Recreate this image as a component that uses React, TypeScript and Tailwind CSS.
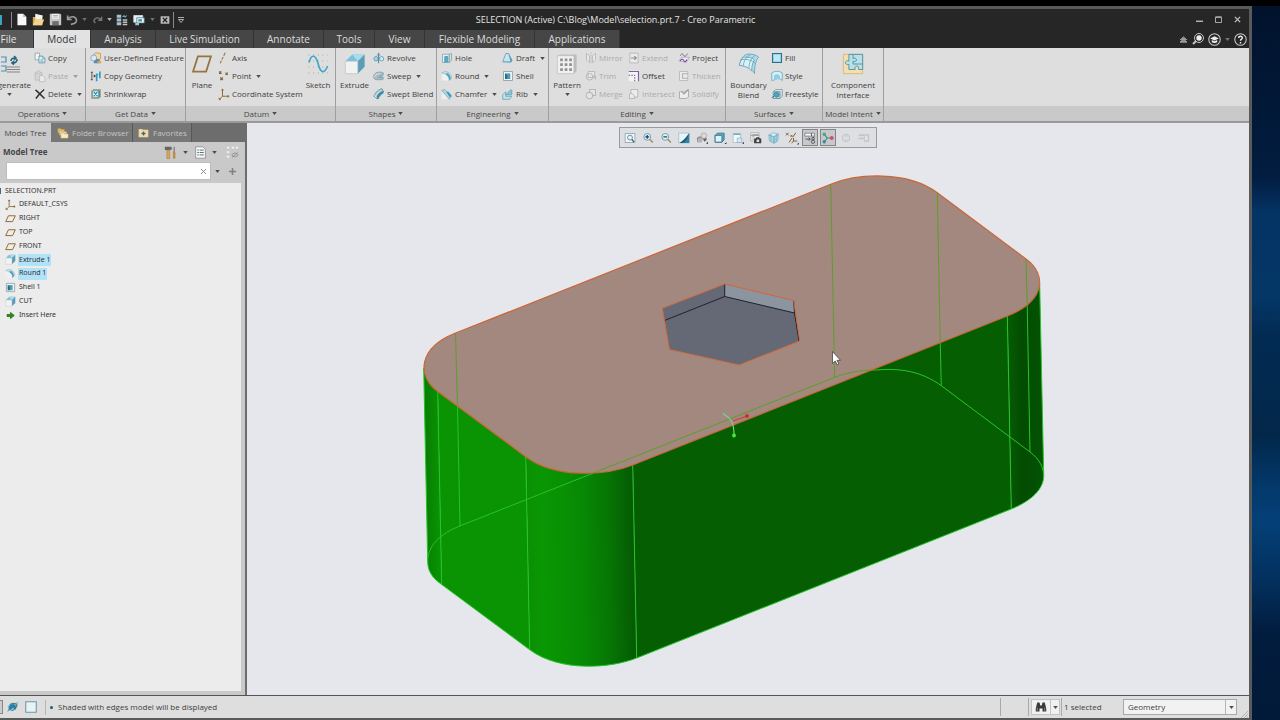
import React, { useState } from "react";

type IconProps = { name: string; className?: string };

const ICONS: Record<string, React.ReactNode> = {
  copy: (
    <g strokeWidth="1">
      <path d="M1.5 1.5h6v9h-6z" fill="#f4f7f8" stroke="#8b9499" />
      <path d="M6.5 5.5h5l3 3v6h-8z" fill="#d9eef5" stroke="#5f8797" />
      <path d="M11.5 5.5v3h3M8.500 10.500h4M8.500 12.500h4" fill="none" stroke="#5fa8c2" />
    </g>
  ),
  paste: (
    <g stroke="#b7b7b7">
      <path d="M1.5 3.500h9v10h-9z" fill="#d4d4d4" />
      <path d="M4 1.500h4v3H4z" fill="#e8e8e8" />
      <path d="M7.500 7.500h4l3 3v5h-7z" fill="#ececec" />
    </g>
  ),
  delete: <path d="M2 2.500C6 6 10 10 14 14M13.500 2C9 6 6 9 2.500 14" stroke="#2e2e2e" strokeWidth="1.900" fill="none" />,
  udf: (
    <g>
      <path d="M5 3l3-2 6 1v7l-3 2H5z" fill="#f5d9a0" stroke="#b88b45" />
      <circle cx="5" cy="8" r="4" fill="#d5ebf3" stroke="#6fa0b5" />
      <path d="M5 13l4-4 4 1v5H5z" fill="#5c87b8" />
      <path d="M10 12h5v3h-5z" fill="#d8a757" />
    </g>
  ),
  copygeom: (
    <g fill="none">
      <path d="M2.500 3v10M1 3h3M1 13h3" stroke="#333" />
      <path d="M5 6l3 2-3 2z" fill="#333" />
      <path d="M9 15V6h4V2M13 6v5" stroke="#3c9bbb" strokeWidth="2.500" />
      <path d="M11 2v12" stroke="#e9f6fa" />
    </g>
  ),
  shrink: (
    <g>
      <path d="M2 4l2-2h10v10l-2 2H2z" fill="#eadbb4" stroke="#a98f55" />
      <path d="M3.500 3.500h9v9h-9z" fill="#d8f0f8" stroke="#3f88a5" />
      <path d="M5 5l5 6M10 5l-5 6M12 3v9" stroke="#25799b" strokeWidth="1.500" />
    </g>
  ),
  plane: <path d="M5 2.500h9.500L11 13.500H1.500z" fill="none" stroke="#967440" strokeWidth="1.300" />,
  planeflat: <path d="M5 4h10l-4 8.500H1z" fill="#f3ecdf" stroke="#856a3e" strokeWidth="1.400" />,
  axis: <path d="M9.500 1L7.700 5M7 6.500L5.200 10M4.500 11.500L3 15" stroke="#967440" strokeWidth="1.400" />,
  point: (
    <path
      d="M1.500 2l3 3M4.500 2l-3 3M10 3.500l3 3M13 3.500l-3 3M3 10l3.500 3.500M6.500 10L3 13.500"
      stroke="#7d6139"
      strokeWidth="1.500"
    />
  ),
  csys: (
    <g stroke="#8b6a38" fill="#8b6a38" strokeWidth="1.300">
      <path d="M6 2v9h8M6 11l-4 4" fill="none" />
      <path d="M4.500 3L6 1l1.500 2zM13 9.500l2 1.500-2 1.500zM1 13l.5 2.500H4z" strokeWidth=".5" />
    </g>
  ),
  sketch: (
    <g fill="none">
      <path d="M1 1.500h14M1 5.800h14M1 10.200h14M1 14.500h14" stroke="#8a8a8a" strokeWidth=".6" strokeDasharray=".6 2.800" />
      <path d="M1.500 7C3 .5 6 1.500 7.500 6s2 8 4.500 7.500c1.500-.3 2-2 3-4" stroke="#3fa6c9" strokeWidth="1.200" />
    </g>
  ),
  extrude: (
    <g>
      <path d="M1 6l5-5h9L10 6z" fill="#7cc0da" />
      <path d="M6 1h9L10 6z" fill="#a8dcec" />
      <path d="M10 6l5-5v9l-5 5z" fill="#5b9db5" />
      <path d="M1 6h9v9H1z" fill="#f2f2f2" stroke="#b5c5cb" strokeWidth=".5" />
    </g>
  ),
  revolve: (
    <g fill="none">
      <path d="M7.500 1v14" stroke="#2f5b70" />
      <ellipse cx="4" cy="9" rx="2.700" ry="3" fill="#a9d5e3" stroke="#4390ad" />
      <ellipse cx="11.500" cy="9" rx="2.700" ry="3" fill="#d2edf5" stroke="#4390ad" />
      <path d="M5 4h5" stroke="#4390ad" />
    </g>
  ),
  sweep: (
    <g>
      <path d="M1 7c3-5 9-5 13-3l-1 4c-4-2-6-1-7 2l8 0-1 3H4C1 12 0 9 1 7z" fill="#aebdc2" stroke="#6e8b95" strokeWidth=".8" />
      <circle cx="10" cy="9" r="2" fill="#5fb6d3" />
      <path d="M2 9c2-4 5-4 8-4" stroke="#eef6f8" fill="none" />
    </g>
  ),
  sweptblend: (
    <g>
      <path d="M1 11c3-6 6-9 11-10l2 4c-4 1-6 4-8 9z" fill="#bcd3da" stroke="#46788b" strokeWidth=".9" />
      <path d="M4 14C6 8 9 5 14 4v3c-4 2-5 4-7 8z" fill="#3d8ba8" />
      <path d="M2 10l3 3" stroke="#fff" />
    </g>
  ),
  hole: (
    <g stroke="#4b91a9" fill="#bfe3ee">
      <path d="M2 3h9v11H2z" fill="#e2f3f8" stroke="#7d9da8" />
      <path d="M11 3l3-1v9l-3 3z" fill="#d2dee2" stroke="#7d9da8" />
      <path d="M5 14V6h4v8" fill="#52acca" />
    </g>
  ),
  round: (
    <g>
      <path d="M1 4l4-2c6 0 9 4 9 9l-3 3c0-6-3-9-10-10z" fill="#bfe0ea" stroke="#86a9b5" strokeWidth=".7" />
      <path d="M8 4c3 1 5 4 5 8l-2 2c0-4-2-6-5-8z" fill="#4ba7c6" />
      <path d="M1 5c6 0 9 4 9 9H1z" fill="#f0f0f0" />
    </g>
  ),
  chamfer: (
    <g>
      <path d="M1 3l4-1 9 9-3 4z" fill="#a9d7e6" stroke="#7198a5" strokeWidth=".7" />
      <path d="M7 5l3 0 4 5-2 3z" fill="#3c9bbd" />
      <path d="M1 5l9 10H1z" fill="#efefef" />
    </g>
  ),
  draft: (
    <g>
      <path d="M1 13L5 2h4l3 11z" fill="#c5e6f0" stroke="#5e97ab" />
      <path d="M9 2l5 9-2 3z" fill="#4d9db9" />
      <path d="M1 13l11 1" stroke="#72afc4" />
    </g>
  ),
  shell: (
    <g>
      <path d="M2 2h12v12H2z" fill="#eef3f4" stroke="#82959c" />
      <path d="M4 4.500h7v7.500H4z" fill="#4d9cb8" />
      <path d="M4 4.500l3 2.500v5H4z" fill="#2c6b83" />
    </g>
  ),
  rib: (
    <g stroke="#5d9bae">
      <path d="M1 9l4-4v6h8l-3 4H1z" fill="#bfe5ef" />
      <path d="M5 9l7-7 1 1v6z" fill="#7fcbe0" />
    </g>
  ),
  pattern: (
    <g>
      <path d="M1 2l2-1h12v12l-2 2" fill="#bcbcbc" />
      <path d="M1 2h12v13H1z" fill="#f1f1f1" stroke="#bdbdbd" strokeWidth=".5" />
      <path d="M3 4h2v2H3zM6.300 4h2v2h-2zM9.600 4h2v2h-2zM3 7.500h2v2H3zM6.300 7.500h2v2h-2zM9.600 7.500h2v2h-2zM3 11h2v2H3zM6.300 11h2v2h-2zM9.600 11h2v2h-2z" fill="#929292" />
    </g>
  ),
  mirror: (
    <g fill="#e8e8e8" stroke="#b0b0b0">
      <path d="M2 2l4 3v9l-4-3zM14 2l-4 3v9l4-3z" />
      <path d="M8 1v14" strokeDasharray="2 1" />
    </g>
  ),
  trim: (
    <g fill="#e6e6e6" stroke="#adadad">
      <path d="M4 2h9v8H4z" />
      <circle cx="6" cy="9" r="4.500" fill="none" />
      <path d="M9 8h5v5" fill="none" />
    </g>
  ),
  merge: (
    <g fill="#e3e3e3" stroke="#a6a6a6">
      <circle cx="6" cy="10" r="4.500" />
      <path d="M6 2h8v8h-4c0-3-1-4-4-4z" />
    </g>
  ),
  extend: (
    <g fill="none" stroke="#adadad">
      <path d="M2.500 1.500h11v13h-11z" fill="#ebebeb" />
      <path d="M4 8h7M8.500 5.500L11 8l-2.500 2.500" stroke="#8d8d8d" strokeWidth="1.500" />
    </g>
  ),
  offset: (
    <g fill="none">
      <path d="M1 1h14v14H1z" fill="#f6f3f8" />
      <path d="M1 2h13v13" stroke="#7d62a0" strokeWidth="1.600" />
      <path d="M1 7h8v8" stroke="#333" strokeDasharray="2 1.500" />
    </g>
  ),
  intersect: (
    <g fill="#ececec" stroke="#ababab">
      <path d="M4 2h9v10H4z" />
      <path d="M2 8c3-2 6 0 7 6H2z" />
    </g>
  ),
  project: (
    <g fill="none">
      <path d="M1 12l4-5 10 0-4 7z" fill="#eee8f3" stroke="#a58fbb" strokeWidth=".8" />
      <path d="M3 5c2-4 4-2 5 0s3 0 5-3" stroke="#555" />
      <path d="M3 12c2-4 4-2 5 0s3 0 4-2" stroke="#6c4796" strokeWidth="1.400" />
    </g>
  ),
  thicken: (
    <g fill="#ebebeb" stroke="#b0b0b0">
      <path d="M2 2h11v12H2z" />
      <path d="M13 5H6v6h7" fill="none" strokeWidth="1.500" />
    </g>
  ),
  solidify: (
    <g fill="#ececec" stroke="#9c9c9c">
      <path d="M2 5c2-1 3 1 5 1s4-4 7-3v9l-3 2H2z" />
      <path d="M5 4l3 4 6-6" fill="none" strokeWidth="1.500" />
    </g>
  ),
  boundary: (
    <g stroke="#699fb1" strokeWidth=".6">
      <path d="M1 9C2 4 4 2 6 1c3-.5 7 0 9 2-2 2-3 6-3 12-1-3-6-6-11-6z" fill="#a9deee" />
      <path d="M1 9c1-4 2-5 3-6 3 0 6 0 8 2-2 3-2 6-2 8-2-2-5-4-9-4z" fill="#d9f2f9" />
      <path d="M4 9c0-3 2-6 5-8M8 11c0-4 1-6 4-9M2 5c4-1 8 0 11 3" fill="none" />
    </g>
  ),
  fill: (
    <g>
      <path d="M2 2h12v12H2z" fill="#98d4e8" stroke="#2c7089" strokeWidth="1.400" />
      <path d="M4 4h8v8H4z" fill="#bfe7f3" />
    </g>
  ),
  style: (
    <g>
      <path d="M1 4c4-3 10-3 14 0v10c-4-4-7-3-10-1l-4 1z" fill="#d9f0f7" stroke="#5e9eb3" />
      <path d="M4 13V7c3-2 6-2 8 1v4" fill="#8fcfe3" />
    </g>
  ),
  freestyle: (
    <g fill="none">
      <path d="M3 5l3-3h9v9l-3 3" stroke="#6f98a5" />
      <path d="M3 5h9v9H3z" stroke="#55828f" fill="#c4e5ee" />
      <circle cx="7.500" cy="9" r="3.300" fill="#4ba5c3" stroke="#2d7c98" />
      <path d="M1 13l3-2" stroke="#444" />
    </g>
  ),
  component: (
    <g>
      <path d="M1 1h14v14H1z" fill="#f3dfae" stroke="#c9ac6b" strokeWidth=".5" />
      <path d="M5 1h10v11h-3c.5-1.500-.2-2.500-1.200-2.500S9 10.500 9.600 12H5V8.300c-1.500.5-2.500-.3-2.500-1.300S3.500 5.300 5 5.900z" fill="#b5e1ed" stroke="#4c8797" strokeWidth=".6" />
      <path d="M8 1v3c1.500-.6 2.500 0 2.500 1S9.500 6.500 8 6v2h7" fill="none" stroke="#4c8797" strokeWidth=".6" />
    </g>
  ),
  newfile: (
    <g>
      <path d="M3 1h7l4 4v10H3z" fill="#f7f7f7" />
      <path d="M10 1v4h4z" fill="#bdbdbd" />
    </g>
  ),
  open: (
    <g>
      <path d="M1 5h5l1-2h6v12H1z" fill="#d8a94e" />
      <path d="M4 1l9 2-1 5H4z" fill="#f3f3f3" />
      <path d="M4 8h11l-3 7H1z" fill="#f2d48f" />
    </g>
  ),
  save: (
    <g>
      <path d="M1 1h13l1 1v13H1z" fill="#c5c5c5" />
      <path d="M4 1h8v6H4z" fill="#f6f6f6" />
      <path d="M4 10h8v5H4z" fill="#6e6e6e" />
      <path d="M5 3h6M5 5h6" stroke="#888" strokeWidth=".8" />
    </g>
  ),
  undo: <path d="M2 3v5h5M2 8c2-3 5-4 8-3 4 2 4 6 0 8l-4 1" fill="none" stroke="#9c9c9c" strokeWidth="2" />,
  redo: <path d="M14 4v5H9M14 9c-2-3-5-4-8-3-4 2-4 5-1 7" fill="none" stroke="#777" strokeWidth="2" />,
  regen: (
    <g>
      <path d="M1 1h6v4H1zM1 6h6v4H1zM1 11h6v4H1z" fill="#a7c2cb" />
      <path d="M9 7h6v2H9zM9 10h6v2H9zM9 13h6v2H9z" fill="#c4c4c4" />
      <path d="M8 4l3-3 1 2 3-2-2 4-2-1z" fill="#5bb2d0" />
    </g>
  ),
  windows: (
    <g stroke="#cfe5ec">
      <path d="M1 2h12v9H1z" fill="#e8eff1" />
      <path d="M5 5h10v7H5z" fill="#f4f8f9" stroke="#39788f" />
      <path d="M7 7h5v3H7z" fill="#3b8eac" stroke="none" />
      <path d="M3 12h5v3H3z" fill="#a9c4cc" stroke="none" />
    </g>
  ),
  closewin: (
    <g>
      <path d="M1 2h14v12H1z" fill="#b9b9b9" />
      <path d="M4.500 4.500l7 7M11.500 4.500l-7 7" stroke="#222" strokeWidth="2" />
    </g>
  ),
  bigregen: (
    <g fill="none">
      <path d="M0 1h5v5H0M0 10h5v5H0" stroke="#4293af" strokeWidth="1.200" />
      <path d="M10 5c0-3 2-3 4-3M13 0l2 2-2 2M16 3c0 3-2 4-4 4M13 5l-2 2 2 1.500" stroke="#26627a" strokeWidth="1.600" />
      <path d="M6 11h13M6 13.500h13M6 16h13" stroke="#858585" />
    </g>
  ),
  folders: (
    <g stroke="#a48443" strokeWidth=".5">
      <path d="M1 2h4l1 1h4v5H1z" fill="#e6bd68" />
      <path d="M3 5h4l1 1h5v5H3z" fill="#f2d595" />
      <path d="M5 8h4l1 1h5v6H5z" fill="#f8e8c3" />
    </g>
  ),
  favorites: (
    <g>
      <path d="M1 3h5l1 1h8v11H1z" fill="#f2ddb0" stroke="#ba9654" strokeWidth=".5" />
      <path d="M8 6.500v6M5 9.500h6" stroke="#3d6676" strokeWidth="2" />
    </g>
  ),
  tools: (
    <g>
      <path d="M1 1h8l1 3-3 1H1z" fill="#666" />
      <path d="M3.500 5h3.500v10.500H3.500z" fill="#d4a657" stroke="#8f6d31" strokeWidth=".5" />
      <path d="M12.500 1v8" stroke="#777" strokeWidth="1.400" />
      <path d="M11 7h3v8.500h-3z" fill="#b98d45" />
    </g>
  ),
  list: (
    <g>
      <path d="M2 1h9l3 3v11H2z" fill="#f8f8f8" stroke="#777" strokeWidth=".8" />
      <path d="M4 5h2M4 8h2M4 11h2M7 5h5M7 8h5M7 11h5" stroke="#54707b" strokeWidth="1.200" />
    </g>
  ),
  hidden: (
    <g fill="none">
      <path d="M1 2h3M1 7.500h3M1 13h3M7 2h3M12 2h3" stroke="#f1f1f1" strokeWidth="2" />
      <path d="M7 11c2-3 6-3 8 0-2 3-6 3-8 0zM7.500 14l7-6" stroke="#888" />
    </g>
  ),
  arrow: <path d="M3 6.500h5V3.500L13.500 8 8 12.500v-3H3z" fill="#23920f" stroke="#14600a" />,
  refit: (
    <g fill="none">
      <path d="M1.500 2h13v12h-13z" stroke="#8d979b" fill="#f3f6f7" />
      <circle cx="8" cy="7.500" r="3.300" fill="#e0f2f8" stroke="#4b91a9" strokeWidth="1.200" />
      <path d="M10.500 10l3 3.500" stroke="#3b5d69" strokeWidth="1.800" />
    </g>
  ),
  zoomin: (
    <g fill="none">
      <circle cx="7" cy="6.500" r="4.500" fill="#dff3fa" stroke="#6d9cab" strokeWidth="1.300" />
      <path d="M7 4v5M4.500 6.500h5" stroke="#123f5c" strokeWidth="1.600" />
      <path d="M10.500 10l4 4" stroke="#a38c62" strokeWidth="2" />
    </g>
  ),
  zoomout: (
    <g fill="none">
      <circle cx="7" cy="6.500" r="4.500" fill="#dff3fa" stroke="#6d9cab" strokeWidth="1.300" />
      <path d="M4.500 6.500h5" stroke="#123f5c" strokeWidth="1.600" />
      <path d="M10.500 10l4 4" stroke="#a38c62" strokeWidth="2" />
    </g>
  ),
  repaint: (
    <g>
      <path d="M1 1.500h14v13H1z" fill="#e6f5fa" stroke="#8ca5ad" strokeWidth=".7" />
      <path d="M15 3v11.500H4C9 13 13 9 15 3z" fill="#2d85a6" />
      <path d="M2 14.500h4C10 13 13 9 15 3V1.500C11 6 8 11 2 14.500z" fill="#1b5a73" />
    </g>
  ),
  display: (
    <g>
      <path d="M1 8l3-2 6 0-3 7-5 1z" fill="#8b8b8b" />
      <path d="M9 8h5v3l-3 2z" fill="#666" />
      <circle cx="10.500" cy="5" r="3.800" fill="#d9d9d9" stroke="#808080" strokeWidth=".6" />
      <circle cx="5.500" cy="11" r="3.300" fill="#b5b5b5" />
      <path d="M16 13v2.500h-2.500z" fill="#222" />
    </g>
  ),
  orient: (
    <g stroke="#27677f">
      <path d="M1.500 4.500l3-3h9v9l-3 3h-9z" fill="#5cacc8" />
      <path d="M1.500 4.500h9v9h-9z" fill="#dff2f8" />
      <path d="M16.500 13.500V16H14z" fill="#222" stroke="none" />
    </g>
  ),
  views: (
    <g>
      <path d="M1.500 2h10v12h-10z" fill="#f3f7f8" stroke="#8ea4ac" strokeWidth=".7" />
      <path d="M2 2h9v2H2z" fill="#69b1c9" />
      <path d="M7 8h6v6H7z" fill="#d3edf5" stroke="#6a9dac" strokeWidth=".7" />
      <path d="M16 13v2.500h-2.500z" fill="#222" />
    </g>
  ),
  camera: (
    <g>
      <path d="M1 1h11v11H1z" fill="#f1f1f1" stroke="#888" strokeWidth=".7" />
      <path d="M3 3.500h8M3 6.500h3M3 9.500h2M1 4.700h11" stroke="#888" />
      <path d="M5.500 8.500h2l1-1.500h3.500l1 1.500h2V15h-9.500z" fill="#3d3d3d" />
      <circle cx="10.500" cy="11.500" r="2" fill="#ddd" />
    </g>
  ),
  section: (
    <g stroke="#69a4b7" strokeWidth=".8">
      <path d="M1 4l7 2v9l-6-3zM8 6l6-3-1 9-5 3z" fill="#a9d8e6" />
      <path d="M1 4l6-3 7 2-6 3z" fill="#daf0f6" />
      <path d="M4 3v10M11 2v11" fill="none" />
    </g>
  ),
  datums: (
    <g fill="none" stroke="#7e6333" strokeWidth="1.300">
      <path d="M0 1l3.500 3.500M3.500 1L0 4.500M6 4l2.500 2.500M8.500 4L6 6.500M13 1L9 7M8 8l-4 6M10 8v4h5M10 12l-2.500 3" />
      <path d="M17 14v2.500h-2.500z" fill="#222" stroke="none" />
    </g>
  ),
  annot: (
    <g fill="none" stroke="#3b3b3b">
      <path d="M1 1.500h13v4H1z" fill="#f2f2f2" stroke="#777" />
      <path d="M10 1.500v4M2 9.500h6M6 7.500l2.500 2L6 11.500" />
      <circle cx="12" cy="9" r="1.700" />
      <circle cx="12" cy="13" r="2.200" />
      <path d="M14 6.500l-2 1" />
    </g>
  ),
  spin: (
    <g fill="none">
      <path d="M3 3l4 5h6M7 8l-4 5" stroke="#388c75" strokeWidth="1.500" />
      <circle cx="3" cy="3" r="2.200" fill="#3fae6b" />
      <circle cx="13" cy="8" r="2.600" fill="#d0506c" />
      <circle cx="3" cy="13" r="2.200" fill="#3f83a5" />
    </g>
  ),
  pause: (
    <g fill="none" stroke="#c2c4c7" strokeWidth="1.300">
      <circle cx="8" cy="8" r="5" fill="#d3d4d6" />
      <path d="M4 8h8" stroke="#dfe0e2" strokeWidth="2.500" />
    </g>
  ),
  resume: (
    <g>
      <path d="M1 3h14v10H8V9.500H1z" fill="#c3c5c8" />
      <path d="M9 5h4v6H9z" fill="#dfe0e2" />
      <path d="M1 5.500h7v2H1z" fill="#dfe0e2" />
    </g>
  ),
  model: (
    <g>
      <path d="M1 8c1-5 6-6 9-5l5-2c-1 8-3 12-8 12H2z" fill="#86bfd4" />
      <path d="M3 8c2-4 6-4 8-2v5l-3-3-4 4zM1 14l3-5" fill="#277da2" stroke="#277da2" />
      <path d="M4 5c3-3 8-2 9 0s-3 7-7 8" fill="none" stroke="#39505a" />
    </g>
  ),
  panel: <path d="M2 2h12v12H2z" fill="#e6f4f8" stroke="#6f95a2" strokeWidth="1.200" />,
  find: (
    <g fill="#3a3a3a">
      <path d="M3 2h3l1 4h2l1-4h3l2 8v4h-5v-4H6v4H1v-4z" />
      <path d="M3 9v4M13 9v4" stroke="#a3a3a3" />
    </g>
  ),
};

function Icon({ name, className = "size-3" }: IconProps) {
  return (
    <svg viewBox="0 0 16 16" className={`${className} shrink-0 overflow-visible`} aria-hidden="true">
      {ICONS[name]}
    </svg>
  );
}

function Caret({ className = "text-[#4b4b4b]" }: { className?: string }) {
  return (
    <svg viewBox="0 0 6 4" className={`h-[3px] w-[5px] shrink-0 ${className}`} aria-hidden="true">
      <path d="M0 0h6L3 4z" fill="currentColor" />
    </svg>
  );
}

type Cmd = { icon: string; label: string; menu?: boolean; off?: boolean };

function Column({ items, className = "" }: { items: Cmd[]; className?: string }) {
  return (
    <div className={`flex shrink-0 flex-col ${className}`}>
      {items.map((c) => (
        <button
          key={c.label}
          type="button"
          disabled={c.off}
          className="flex h-[18px] items-center gap-[2px] whitespace-nowrap text-[#3d3d3d] disabled:text-[#aaaaaa]"
        >
          <Icon name={c.icon} />
          <span>{c.label}</span>
          {c.menu && (
            <span className="pl-[3px]">
              <Caret className={c.off ? "text-[#9a9a9a]" : "text-[#4b4b4b]"} />
            </span>
          )}
        </button>
      ))}
    </div>
  );
}

function BigButton({
  icon,
  lines,
  menu,
  className = "",
}: {
  icon: string;
  lines: string[];
  menu?: boolean;
  className?: string;
}) {
  return (
    <button type="button" className={`flex shrink-0 flex-col items-center pt-[2px] text-[#3d3d3d] ${className}`}>
      <span className="flex h-[26px] items-center">
        <Icon name={icon} className="size-[22px]" />
      </span>
      <span className="pt-[3px]">
        {lines.map((l) => (
          <span key={l} className="block h-[10px] whitespace-nowrap leading-[10px]">
            {l}
          </span>
        ))}
      </span>
      {menu && (
        <span className="flex h-[8px] items-center">
          <Caret />
        </span>
      )}
    </button>
  );
}

function Group({ title, className, children }: { title: string; className: string; children: React.ReactNode }) {
  return (
    <section
      aria-label={title}
      className={`flex shrink-0 flex-col border-r border-[#9f9f9f] ${className}`}
    >
      <div className="flex h-[58px] overflow-hidden pt-px">{children}</div>
      <button
        type="button"
        className="flex h-[15px] items-center justify-center gap-[3px] whitespace-nowrap bg-[#c9c9c9] text-[#484848]"
      >
        {title}
        <Caret />
      </button>
    </section>
  );
}

const TABS: [string, string][] = [
  ["File", "w-[34px] bg-[#5a5a5a] pr-4 text-[#e2e2e2]"],
  ["Model", "w-[57px] bg-[#e2e2e2] text-[#333333]"],
  ["Analysis", "w-[65px] bg-[#464646] text-[#dcdcdc]"],
  ["Live Simulation", "w-[98px] bg-[#464646] text-[#dcdcdc]"],
  ["Annotate", "w-[70px] bg-[#464646] text-[#dcdcdc]"],
  ["Tools", "w-[51px] bg-[#464646] text-[#dcdcdc]"],
  ["View", "w-[50px] bg-[#464646] text-[#dcdcdc]"],
  ["Flexible Modeling", "w-[110px] bg-[#464646] text-[#dcdcdc]"],
  ["Applications", "w-[85px] bg-[#464646] text-[#dcdcdc]"],
];

function TitleBar() {
  return (
    <header className="flex h-[21px] items-center bg-[#262626] text-[9px] text-[#e4e4e4]">
      <div className="flex w-[186px] shrink-0 items-center">
        <span className="mr-[9px] h-[10px] w-[2px] bg-[#3ba3c4]" />
        <span className="mr-[3px] h-[16px] w-px bg-[#8a8a8a]" />
        <div className="flex items-center gap-[4px]">
          {["newfile", "open", "save", "undo"].map((n) => (
            <button key={n} type="button" aria-label={n}>
              <Icon name={n} className="size-[13px]" />
            </button>
          ))}
        </div>
        <span className="ml-[3px] mr-[5px]"><Caret className="text-[#707070]" /></span>
        <button type="button" aria-label="redo"><Icon name="redo" className="size-[11px]" /></button>
        <span className="ml-[4px] mr-[4px]"><Caret className="text-[#b5b5b5]" /></span>
        <button type="button" aria-label="regenerate" className="mr-[5px]"><Icon name="regen" /></button>
        <button type="button" aria-label="windows"><Icon name="windows" /></button>
        <span className="ml-[5px] mr-[5px]"><Caret className="text-[#707070]" /></span>
        <button type="button" aria-label="close window"><Icon name="closewin" className="size-[10px]" /></button>
        <span className="ml-[3px] mr-[4px] h-[16px] w-px bg-[#8a8a8a]" />
        <svg viewBox="0 0 6 6" className="size-[6px] shrink-0" aria-hidden="true">
          <path d="M0 .5h6M.5 2.500h5L3 5.500z" fill="none" stroke="#d0d0d0" strokeWidth=".8" />
        </svg>
      </div>
      <h1 className="flex-1 whitespace-nowrap text-center">
        SELECTION (Active) C:\Blog\Model\selection.prt.7 - Creo Parametric
      </h1>
      <div className="flex w-[204px] shrink-0 items-center justify-end gap-[12px] pr-[8px]">
        <button type="button" aria-label="Minimize">
          <svg viewBox="0 0 8 8" className="size-[7px]"><path d="M0 6h8" stroke="#c2c2c2" strokeWidth="1.500" /></svg>
        </button>
        <button type="button" aria-label="Maximize">
          <svg viewBox="0 0 8 8" className="size-[7px]"><path d="M.5 1.500h7v6h-7zM.5 1h7" fill="none" stroke="#c2c2c2" /></svg>
        </button>
        <button type="button" aria-label="Close">
          <svg viewBox="0 0 8 8" className="size-[7px]"><path d="M1 1l6 6M7 1L1 7" stroke="#c2c2c2" strokeWidth="1.500" /></svg>
        </button>
      </div>
    </header>
  );
}

function TabBar() {
  return (
    <div className="flex h-[18px] justify-between bg-[#262626]">
      <nav className="flex text-[10px]">
        {TABS.map(([label, cls]) => (
          <button
            key={label}
            type="button"
            className={`flex shrink-0 items-center justify-center whitespace-nowrap border-r border-[#333333] ${cls}`}
          >
            {label}
          </button>
        ))}
      </nav>
      <div className="flex items-center gap-[4px] pr-[2px]">
        <button type="button" aria-label="Minimize the ribbon">
          <svg viewBox="0 0 10 8" className="h-[7px] w-[9px]">
            <path d="M1 4.500L5 1l4 3.500M1 7L5 3.500 9 7z" fill="#8b8b8b" stroke="#b9b9b9" strokeWidth=".9" />
          </svg>
        </button>
        <button type="button" aria-label="Search commands">
          <svg viewBox="0 0 12 12" className="size-[12px]">
            <circle cx="7" cy="5" r="4.500" fill="#262626" stroke="#c4c4c4" />
            <circle cx="7" cy="5" r="2.700" fill="#f1f1f1" />
            <path d="M4 8l-3 3" stroke="#c4c4c4" strokeWidth="2" />
          </svg>
        </button>
        <button type="button" aria-label="Learning">
          <svg viewBox="0 0 12 12" className="size-[13px]">
            <circle cx="6" cy="6" r="5.300" fill="none" stroke="#c4c4c4" />
            <path d="M2 5l4-2 4 2-4 2zM3.500 6.500v2c1.500 1 3.500 1 5 0v-2L6 7.700z" fill="#ededed" />
          </svg>
        </button>
        <Caret className="text-[#777777]" />
        <button type="button" aria-label="Help">
          <svg viewBox="0 0 12 12" className="size-[13px]">
            <circle cx="6" cy="6" r="5.300" fill="none" stroke="#c4c4c4" />
            <path d="M4.300 4.700C4.300 2.300 7.900 2.500 7.700 4.600 7.600 5.700 6 5.700 6 7.200M6 8.200v1.400" fill="none" stroke="#f1f1f1" strokeWidth="1.300" />
          </svg>
        </button>
      </div>
    </div>
  );
}

function Ribbon() {
  return (
    <div className="flex h-[75px] overflow-hidden border-b-2 border-b-[#9a9a9a] bg-[#dedede] text-[8px] leading-[10px]">
      <Group title="Operations" className="w-[86px]">
        <div className="flex w-[33px] shrink-0 flex-col items-end pr-[2px] pt-[2px] text-[#3d3d3d]">
          <button type="button" aria-label="Regenerate" className="flex flex-col items-end">
            <span className="flex h-[26px] items-center pr-[14px]">
              <Icon name="bigregen" className="size-4" />
            </span>
            <span className="pt-[3px]">generate</span>
            <span className="flex h-[8px] items-center pr-[19px]"><Caret /></span>
          </button>
        </div>
        <Column
          className="pl-px"
          items={[
            { icon: "copy", label: "Copy" },
            { icon: "paste", label: "Paste", menu: true, off: true },
            { icon: "delete", label: "Delete", menu: true },
          ]}
        />
      </Group>
      <Group title="Get Data" className="w-[100px]">
        <Column
          className="pl-[4px]"
          items={[
            { icon: "udf", label: "User-Defined Feature" },
            { icon: "copygeom", label: "Copy Geometry" },
            { icon: "shrink", label: "Shrinkwrap" },
          ]}
        />
      </Group>
      <Group title="Datum" className="w-[150px]">
        <BigButton icon="plane" lines={["Plane"]} className="w-[32px]" />
        <Column
          className="w-[85px]"
          items={[
            { icon: "axis", label: "Axis" },
            { icon: "point", label: "Point", menu: true },
            { icon: "csys", label: "Coordinate System" },
          ]}
        />
        <BigButton icon="sketch" lines={["Sketch"]} className="w-[30px]" />
      </Group>
      <Group title="Shapes" className="w-[101px]">
        <BigButton icon="extrude" lines={["Extrude"]} className="w-[37px]" />
        <Column
          items={[
            { icon: "revolve", label: "Revolve" },
            { icon: "sweep", label: "Sweep", menu: true },
            { icon: "sweptblend", label: "Swept Blend" },
          ]}
        />
      </Group>
      <Group title="Engineering" className="w-[112px]">
        <Column
          className="w-[65px] pl-[4px]"
          items={[
            { icon: "hole", label: "Hole" },
            { icon: "round", label: "Round", menu: true },
            { icon: "chamfer", label: "Chamfer", menu: true },
          ]}
        />
        <Column
          items={[
            { icon: "draft", label: "Draft", menu: true },
            { icon: "shell", label: "Shell" },
            { icon: "rib", label: "Rib", menu: true },
          ]}
        />
      </Group>
      <Group title="Editing" className="w-[177px]">
        <BigButton icon="pattern" lines={["Pattern"]} menu className="w-[36px]" />
        <Column
          className="w-[43px]"
          items={[
            { icon: "mirror", label: "Mirror", off: true },
            { icon: "trim", label: "Trim", off: true },
            { icon: "merge", label: "Merge", off: true },
          ]}
        />
        <Column
          className="w-[50px]"
          items={[
            { icon: "extend", label: "Extend", off: true },
            { icon: "offset", label: "Offset" },
            { icon: "intersect", label: "Intersect", off: true },
          ]}
        />
        <Column
          items={[
            { icon: "project", label: "Project" },
            { icon: "thicken", label: "Thicken", off: true },
            { icon: "solidify", label: "Solidify", off: true },
          ]}
        />
      </Group>
      <Group title="Surfaces" className="w-[97px]">
        <BigButton icon="boundary" lines={["Boundary", "Blend"]} className="w-[45px]" />
        <Column
          items={[
            { icon: "fill", label: "Fill" },
            { icon: "style", label: "Style" },
            { icon: "freestyle", label: "Freestyle" },
          ]}
        />
      </Group>
      <Group title="Model Intent" className="w-[61px]">
        <BigButton icon="component" lines={["Component", "Interface"]} className="w-[60px]" />
      </Group>
      <div className="flex flex-1 flex-col pt-[58px]">
        <div className="h-[15px] bg-[#c9c9c9]" />
      </div>
    </div>
  );
}

const TREE: { icon: string; label: string; selected?: boolean }[] = [
  { icon: "csys", label: "DEFAULT_CSYS" },
  { icon: "planeflat", label: "RIGHT" },
  { icon: "planeflat", label: "TOP" },
  { icon: "planeflat", label: "FRONT" },
  { icon: "extrude", label: "Extrude 1", selected: true },
  { icon: "round", label: "Round 1", selected: true },
  { icon: "shell", label: "Shell 1" },
  { icon: "extrude", label: "CUT" },
  { icon: "arrow", label: "Insert Here" },
];

function Sidebar() {
  const [query, setQuery] = useState("");
  return (
    <aside className="flex w-[247px] shrink-0 flex-col border-r-2 border-r-[#6d6d6d] bg-[#c9c9c9] text-[8px]">
      <div className="flex h-[19px] bg-[#6d6d6d] text-[#c6c6c6]">
        <button type="button" className="w-[51px] whitespace-nowrap bg-[#c9c9c9] text-[#444444]">
          Model Tree
        </button>
        <button type="button" className="flex w-[82px] items-center gap-[3px] whitespace-nowrap border-r border-[#575757] bg-[#777777] pl-[6px]">
          <Icon name="folders" />
          Folder Browser
        </button>
        <button type="button" className="flex w-[59px] items-center gap-[4px] whitespace-nowrap border-r border-[#575757] bg-[#777777] pl-[5px]">
          <Icon name="favorites" className="size-[11px]" />
          Favorites
        </button>
      </div>
      <div className="flex h-[20px] items-center pl-[3px] pr-[6px]">
        <h2 className="flex-1 font-bold text-[#454545]">Model Tree</h2>
        <button type="button" aria-label="Settings" className="flex items-center gap-[6px]">
          <Icon name="tools" className="size-[13px]" />
          <Caret />
        </button>
        <button type="button" aria-label="Show" className="ml-[6px] flex items-center gap-[5px]">
          <Icon name="list" className="size-[13px]" />
          <Caret />
        </button>
        <button type="button" aria-label="Hidden items" className="ml-[9px]">
          <Icon name="hidden" className="size-[13px]" />
        </button>
      </div>
      <div className="flex h-[21px] items-start pl-[6px] pr-[9px]">
        <label className="flex h-[18px] flex-1 items-center border border-[#bdbdbd] bg-white pr-[4px]">
          <input
            aria-label="Filter tree"
            value={query}
            onChange={(e) => setQuery(e.target.value)}
            className="w-full min-w-0 flex-1 bg-transparent px-1 outline-none"
          />
          <button type="button" aria-label="Clear" onClick={() => setQuery("")}>
            <svg viewBox="0 0 6 6" className="size-[5px]"><path d="M0 0l6 6M6 0L0 6" stroke="#777777" /></svg>
          </button>
        </label>
        <div className="flex h-[18px] items-center gap-[9px] pl-[4px]">
          <Caret />
          <button type="button" aria-label="Add">
            <svg viewBox="0 0 8 8" className="size-[7px]"><path d="M4 0v8M0 4h8" stroke="#808080" strokeWidth="1.800" /></svg>
          </button>
        </div>
      </div>
      <div className="mb-[4px] mr-[4px] flex-1 bg-[#ececec] pt-px">
        <ul className="grid h-[138px] auto-rows-fr font-['Noto_Sans',sans-serif] text-[7px] text-[#333333]">
          <li className="flex items-center">
            <span className="mr-[4px] h-[6px] w-px bg-[#3e6c7b]" />
            SELECTION.PRT
          </li>
          {TREE.map((t) => (
            <li key={t.label} className="flex items-center gap-[2px] pl-[5px]">
              <Icon name={t.icon} className="size-[11px]" />
              <span className={t.selected ? "flex h-[12px] items-center bg-[#b0e2f8] px-px" : "px-px"}>
                {t.label}
              </span>
            </li>
          ))}
        </ul>
      </div>
    </aside>
  );
}

const VIEW_TOOLS: [string, string, "normal" | "on" | "off"][] = [
  ["refit", "Refit", "normal"],
  ["zoomin", "Zoom In", "normal"],
  ["zoomout", "Zoom Out", "normal"],
  ["repaint", "Repaint", "normal"],
  ["display", "Display Style", "normal"],
  ["orient", "Saved Orientations", "normal"],
  ["views", "View Manager", "normal"],
  ["camera", "Capture", "normal"],
  ["section", "Perspective View", "normal"],
  ["datums", "Datum Display", "normal"],
  ["annot", "Annotation Display", "on"],
  ["spin", "Spin Center", "on"],
  ["pause", "Pause", "off"],
  ["resume", "Resume", "off"],
];

const RIM =
  "M455 333.300L830.700 184.300C857 173.600 907 170.200 937.300 192.700L1026 259C1047 274.500 1046 300.600 1007.300 316L632.700 465C606.700 475.400 556 479.200 525.700 456.700L437.700 391.500C416.700 376 418 348.100 455 333.300z";

function Model() {
  return (
    <svg viewBox="247 123 1002 572" className="absolute inset-0 h-full w-full" role="img" aria-label="Shaded part model">
      <defs>
        <linearGradient id="cornerFront" gradientUnits="userSpaceOnUse" x1="526" y1="560" x2="636" y2="558">
          <stop offset="0" stopColor="#0b8f04" />
          <stop offset=".15" stopColor="#0a9704" />
          <stop offset=".5" stopColor="#088a04" />
          <stop offset=".75" stopColor="#067604" />
          <stop offset="1" stopColor="#045803" />
        </linearGradient>
        <linearGradient id="cornerLeft" gradientUnits="userSpaceOnUse" x1="424" y1="470" x2="441" y2="470">
          <stop offset="0" stopColor="#087d04" />
          <stop offset="1" stopColor="#0a9404" />
        </linearGradient>
        <linearGradient id="cornerRight" gradientUnits="userSpaceOnUse" x1="1008" y1="400" x2="1043" y2="400">
          <stop offset="0" stopColor="#055c03" />
          <stop offset=".4" stopColor="#034c02" />
          <stop offset="1" stopColor="#045303" />
        </linearGradient>
      </defs>
      <path d="M423.700 368L427.700 561C427.700 570 431 577 441.700 584.500L437.700 380z" fill="url(#cornerLeft)" />
      <path d="M437.700 380L441.700 584.500L529.700 649.700L525.700 445z" fill="#0a9404" />
      <path d="M525.700 445L529.700 649.700C560 672.200 610.700 668.400 636.700 658L632.700 455z" fill="url(#cornerFront)" />
      <path d="M632.700 455L636.700 658L1011.300 509L1007.300 305z" fill="#055f02" />
      <path d="M1007.300 305L1011.300 509C1032 500.500 1043.500 489 1043.700 476L1039.700 284z" fill="url(#cornerRight)" />
      <path d={RIM} fill="#a38880" />
      <g fill="none" stroke="#25c42a" strokeWidth="1">
        <path d="M423.700 368L427.700 561C427.700 570 431 577 441.700 584.500L529.700 649.700C560 672.200 610.700 668.400 636.700 658L1011.300 509C1032 500.500 1043.500 489 1043.700 476L1039.700 284" />
        <path d="M437.700 391.500l4 193M525.700 456.700l4 193M632.700 465l4 193M1007.300 316l4 193" />
        <path d="M457.500 407L460 526.300M427.700 561C427.700 546 440 534 459 526.300L593 473.200" />
        <path d="M876 370C900 368 921 371 941.300 385.700L1030 452C1040 459.500 1043.700 468 1043.700 476M940.200 342l1.100 43.700M1027.200 305l2.800 147" />
      </g>
      <g fill="none" stroke="#5c9f26" strokeWidth="1">
        <path d="M455.500 333.300l2 73.700M593 473.200L834.700 377.300C848 372 862 370 876 370M830.700 184.300l4 193M937.300 192.700l2.900 149.300M1026 259l1.200 46" />
      </g>
      <path d={RIM} fill="none" stroke="#cc6633" strokeWidth="1.200" />
      <path d="M662.300 308.300L724.700 284L793.700 300.500L799.700 341L739 365L669.500 349.500z" fill="#656976" />
      <path d="M724.700 284L793.700 300.500L794.500 313L724.700 296.500z" fill="#8c949f" />
      <path d="M724.700 284V296.500L664.500 320.500M724.700 296.500L794.500 313L793.700 301M794.500 313L799 341" fill="none" stroke="#20222b" strokeWidth="1" />
      <path d="M662.300 308.300L724.700 284L793.700 300.500L799.700 341L739 365L669.500 349.500z" fill="none" stroke="#d06a3c" strokeWidth="1" />
      <g fill="none" strokeWidth="1.100">
        <path d="M724 414.500C731 418 734 423 734 435" stroke="#74d68c" />
        <path d="M733 421l14-5" stroke="#d43a3a" />
        <circle cx="724" cy="414" r="1.300" fill="#7ab8a0" />
        <circle cx="747" cy="416" r="1.900" fill="#d02c2c" />
        <circle cx="734" cy="435.500" r="1.900" fill="#3aef3a" />
      </g>
      <path d="M832.500 351.500v12l2.800-2.500 1.800 3.800 1.700-.8-1.800-3.700h3.500z" fill="#ffffff" stroke="#333333" strokeWidth=".7" />
    </svg>
  );
}

function Viewport() {
  return (
    <main className="relative flex min-w-0 flex-1 items-start justify-center bg-[#e5e7ec] pt-[4px]">
      <Model />
      <div role="toolbar" aria-label="View" className="relative flex h-[21px] items-center border border-[#9a9a9a] bg-[#dddfe2] pl-px pr-[3px]">
        {VIEW_TOOLS.map(([icon, label, state]) => (
          <button
            key={icon}
            type="button"
            aria-label={label}
            disabled={state === "off"}
            className={
              state === "on"
                ? "mx-px flex h-[17px] w-[16px] items-center justify-center border border-[#858585] bg-[#c6c8cb]"
                : "flex h-[17px] w-[18px] items-center justify-center"
            }
          >
            <Icon name={icon} />
          </button>
        ))}
      </div>
    </main>
  );
}

function StatusBar() {
  return (
    <footer className="flex h-[23px] items-center border-t border-[#555555] bg-[#dedede] text-[8px] text-[#3d3d3d]">
      <span className="h-[14px] w-[3px] border border-l-0 border-[#888888] bg-[#cccccc]" />
      <button type="button" aria-label="Navigator" className="ml-[4px]"><Icon name="model" /></button>
      <button type="button" aria-label="Browser" className="ml-[5px]"><Icon name="panel" className="size-[14px]" /></button>
      <span className="ml-[7px] h-[15px] w-px bg-[#b5b5b5]" />
      <span className="ml-[4px] size-[3px] rounded-full bg-[#1c5a6b]" />
      <p className="flex-1 whitespace-nowrap pl-[5px]">Shaded with edges model will be displayed</p>
      <span className="h-[18px] w-px bg-[#a9a9a9]" />
      <span className="ml-[27px] h-[18px] w-px bg-[#a9a9a9]" />
      <button type="button" aria-label="Find" className="ml-[2px] flex h-[16px] items-center border border-[#c3c3c3] bg-[#f1f1f1]">
        <span className="flex w-[18px] justify-center"><Icon name="find" /></span>
        <span className="flex h-[14px] w-[9px] items-center justify-center border-l border-[#c3c3c3]"><Caret /></span>
      </button>
      <span className="ml-px h-[18px] w-px bg-[#a9a9a9]" />
      <span className="w-[61px] whitespace-nowrap pl-[2px]">1 selected</span>
      <label className="relative flex h-[16px] w-[114px] border border-[#a8a8a8] bg-[#f2f2f2]">
        <select aria-label="Selection filter" defaultValue="Geometry" className="w-full appearance-none bg-transparent pl-[4px] outline-none">
          <option>Geometry</option>
        </select>
        <span className="pointer-events-none absolute inset-y-0 right-0 flex w-[11px] items-center justify-center border-l border-[#b5b5b5]">
          <Caret />
        </span>
      </label>
      <svg viewBox="0 0 8 8" className="ml-[3px] mr-px size-[8px] self-end" aria-hidden="true">
        <path d="M1 8l7-7M4 8l4-4M6.500 8L8 6.500" stroke="#aaaaaa" strokeWidth=".8" />
      </svg>
    </footer>
  );
}

export default function App() {
  return (
    <div className="flex h-screen flex-col overflow-hidden bg-black pt-[6px] font-['Open_Sans',sans-serif]">
      <div className="flex min-h-0 flex-1">
        <div className="flex min-w-0 flex-1 flex-col overflow-hidden border-y-[3px] border-r-[3px] border-b-2 border-[#5a5a5a]">
          <TitleBar />
          <TabBar />
          <Ribbon />
          <div className="flex min-h-0 flex-1">
            <Sidebar />
            <Viewport />
          </div>
          <StatusBar />
        </div>
        <div className="w-[28px] shrink-0 bg-[linear-gradient(to_bottom,#01122c_0%,#021d40_24%,#043466_29%,#043666_41%,#022b54_46%,#022749_60%,#03386a_67%,#044078_72%,#033160_80%,#021c3d_88%,#021a3a_100%)]" />
      </div>
    </div>
  );
}
